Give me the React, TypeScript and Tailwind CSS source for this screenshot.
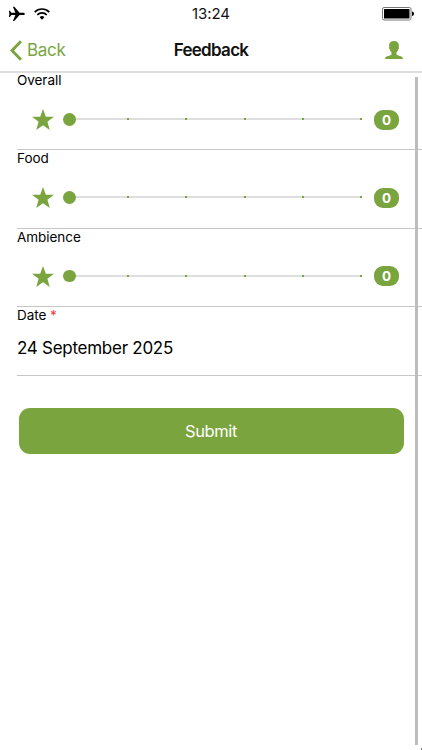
import { useState } from 'react'

const RATINGS = ['Overall', 'Food', 'Ambience']
const STEPS = [1, 2, 3, 4, 5]

function StatusBar() {
  return (
    <div className="grid h-7 grid-cols-3 items-center">
      <div className="flex items-center gap-[9px] pl-2">
        <svg viewBox="0 0 17 16" className="h-4 w-[17px]" fill="#000">
          <path d="M.9 4.800h1l1.500 2h4L4.900.8h1.400l5.300 6H15c1.100 0 1.800.6 1.800 1.100S16.100 9 15 9h-3.400l-5.300 6H4.900l2.500-6h-4l-1.500 2h-1l.5-3.100z" />
        </svg>
        <svg viewBox="0 0 16 12" className="h-3 w-4" fill="none" stroke="#000" strokeWidth="1.7">
          <path d="M.7 4.1a10.2 10.2 0 0 1 14.6 0" />
          <path d="M3.3 6.8a6.6 6.6 0 0 1 9.4 0" />
          <path d="M8 11.7 5.6 9.2a3.4 3.4 0 0 1 4.8 0z" fill="#000" stroke="none" />
        </svg>
      </div>
      <span className="text-center text-[15px] tracking-[-0.1px] text-[#111]">13:24</span>
      <div className="flex justify-end pr-2">
        <svg viewBox="0 0 32 14" className="h-3.5 w-8">
          <rect x="0.5" y="0.5" width="28.5" height="12.5" rx="1.5" fill="#fff" stroke="#777" />
          <rect x="2" y="2" width="25.5" height="9.5" rx="0.5" fill="#000" />
          <path d="M30 4.6c1.3.1 2 1.1 2 2.2s-.7 2.1-2 2.2z" fill="#000" />
        </svg>
      </div>
    </div>
  )
}

function Header() {
  return (
    <header className="grid h-[45px] grid-cols-3 items-center border-b-2 border-[#dedede] pt-px">
      <button type="button" className="flex items-center gap-[5px] pl-2.5 text-[17px] tracking-[-0.3px] text-[#7aa53e]">
        <svg viewBox="0 0 12 21" className="h-[21px] w-3" fill="none" stroke="currentColor" strokeWidth="3">
          <path d="M11 1.2 2 10.5l9 9.3" />
        </svg>
        <span className="pt-0.5">Back</span>
      </button>
      <h1 className="pt-px text-center text-[17px] font-semibold tracking-[-0.7px] text-[#111]">Feedback</h1>
      <div className="flex justify-end pr-[19px]">
        <svg viewBox="0 0 18 18" className="h-[18px] w-[18px]" fill="#7aa53e">
          <path d="M9 0c3.200 0 4.900 1.700 4.900 4.300 0 .6-.1 1.200-.2 1.600.6.3.4 1.700-.4 2.400-.3 1.400-1 2.400-1.800 3.200v2.100c.5.9 2.600 1.300 4.300 1.700 1.500.4 2.200 1.200 2.200 2.700H0c0-1.500.7-2.300 2.200-2.700 1.700-.4 3.800-.8 4.300-1.700v-2.100c-.8-.8-1.500-1.800-1.800-3.200-.8-.7-1-2.100-.4-2.400-.1-.4-.2-1-.2-1.600C4.100 1.700 5.800 0 9 0z" />
        </svg>
      </div>
    </header>
  )
}

function RatingRow({ name, value, onChange }: { name: string; value: number; onChange: (v: number) => void }) {
  return (
    <section className="ml-[17px] h-[78.3px] border-b border-[#c6c6c6]">
      <p className="pt-px text-[13.5px] leading-[15px] tracking-[-0.05px]">{name}</p>
      <div className="mt-[20.7px] flex h-[22px] items-center pl-[15px]">
        <svg viewBox="0 0 22 21" className="h-[21px] w-[22px] shrink-0" fill="#7aa53e">
          <path d="M11 0l2.8 7.7H22l-6.600 5L17.800 21 11 16.200 4.200 21l2.400-8.300L0 7.700h8.200z" />
        </svg>
        <div className="relative ml-[15px] h-[13px] w-[292px]">
          <div className="absolute inset-x-0 top-[5px] h-0.5 bg-[#dedede]" />
          {STEPS.map((s) => (
            <button
              key={s}
              type="button"
              onClick={() => onChange(s)}
              className="absolute top-[5px] h-0.5 w-0.5 bg-[#7aa53e]"
              style={{ left: `${s * 19.93}%` }}
            />
          ))}
          <button
            type="button"
            onClick={() => onChange(0)}
            className="absolute top-0 -ml-1.5 h-[12.5px] w-[12.5px] rounded-full bg-[#7aa53e]"
            style={{ left: `${value * 20}%` }}
          />
        </div>
        <span className="ml-[13px] flex h-5 w-[25px] items-center justify-center rounded-[9px] bg-[#7aa53e] text-[13.5px] font-bold text-white">
          {value}
        </span>
      </div>
    </section>
  )
}

export default function App() {
  const [ratings, setRatings] = useState([0, 0, 0])

  return (
    <div className="relative h-[750px] w-[422px] overflow-hidden bg-white font-['Inter',sans-serif] text-black">
      <StatusBar />
      <Header />
      <main className="-mt-px">
        {RATINGS.map((name, i) => (
          <RatingRow
            key={name}
            name={name}
            value={ratings[i]}
            onChange={(v) => setRatings(ratings.map((r, j) => (j === i ? v : r)))}
          />
        ))}
        <section className="ml-[17px] h-[69px] border-b border-[#c6c6c6]">
          <p className="text-[13.5px] leading-[17px] tracking-[-0.05px]">
            Date <span className="text-[#f03a3a]">*</span>
          </p>
          <p className="mt-[13px] text-[17px] leading-[22px] tracking-[-0.27px]">24 September 2025</p>
        </section>
        <button
          type="button"
          className="mt-[32.6px] ml-[18.5px] flex h-[46px] w-[385px] items-center justify-center rounded-[11px] bg-[#7aa53e] text-[16.5px] tracking-[-0.4px] text-white"
        >
          Submit
        </button>
      </main>
      {/* scroll indicator */}
      <div className="absolute top-[77px] right-1 h-[668px] w-[3.5px] bg-[#bdbdbd]" />
      <div className="absolute right-0 bottom-0 h-0.5 w-px bg-[#777]" />
    </div>
  )
}
